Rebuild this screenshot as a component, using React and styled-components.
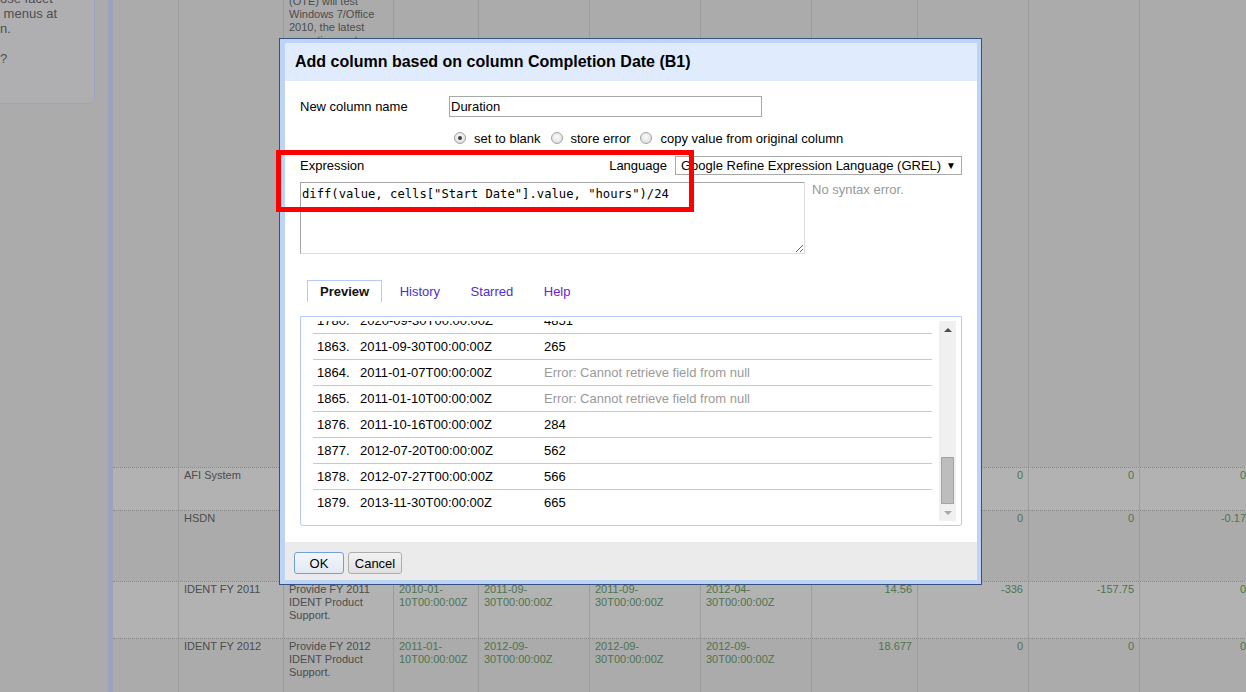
import React from 'react';
import styled, { createGlobalStyle } from 'styled-components';

const GlobalStyle = createGlobalStyle`
  *, *::before, *::after { box-sizing: border-box; }
  html, body { margin: 0; padding: 0; overflow: hidden; }
  body {
    background: #ababab;
    font-family: "Liberation Sans", Arial, sans-serif;
  }
`;

const Page = styled.div`
  position: relative;
  display: flex;
  width: 1246px;
  height: 692px;
  overflow: hidden;
  background: #ababab;
`;

/* ---------- dimmed page behind the dialog ---------- */

const LeftPane = styled.div`
  width: 108px;
  flex-shrink: 0;
`;

const HelpBox = styled.div`
  width: 96px;
  height: 114px;
  margin: -10px 0 0 -1px;
  border: 1px solid #9ca4c4;
  border-radius: 0 0 6px 0;
  background: #afafb1;
  font-size: 13px;
  line-height: 15px;
  color: #4e4e4e;
  white-space: pre;
  overflow: hidden;
`;

const Stripe = styled.div`
  width: 5px;
  flex-shrink: 0;
  background: #9ca2bc;
`;

const Grid = styled.div`
  flex: 1;
  margin-top: -19px;
  display: flex;
  flex-direction: column;
`;

const Row = styled.div`
  display: grid;
  grid-template-columns: 65px 105px 110px 85px 111px 111px 111px 106px 111px 111px 112px;
  flex-shrink: 0;
  height: ${p => p.$h}px;
  background: ${p => (p.$light ? '#b2b2b2' : '#ababab')};
  border-top: ${p => (p.$first ? 'none' : '1px dotted #8a8a8a')};
`;

const Cell = styled.div`
  border-left: ${p => (p.$edge ? 'none' : '1px solid #9c9c9c')};
  padding: 1px 5px 0 5px;
  font-size: 11px;
  line-height: 13px;
  color: ${p => (p.$green ? '#4d744d' : '#4c4c4c')};
  text-align: ${p => (p.$num ? 'right' : 'left')};
  white-space: nowrap;
  overflow: hidden;
`;

/* ---------- dialog ---------- */

const Dialog = styled.div`
  position: absolute;
  left: 279px;
  top: 38px;
  width: 703px;
  height: 547px;
  border: 1px solid #34527a;
  background: #bdd4f7;
  padding: 4px 4px 4px 5px;
  display: flex;
  flex-direction: column;
  font-size: 13px;
  color: #000;
`;

const Header = styled.div`
  height: 38px;
  flex-shrink: 0;
  display: flex;
  align-items: center;
  padding-left: 10px;
  background: #e0ecfe;
  font-size: 16px;
  font-weight: bold;
`;

const Body = styled.div`
  flex: 1;
  background: #fff;
  padding: 15px 15px 16px 15px;
  display: flex;
  flex-direction: column;
`;

const NameRow = styled.div`
  display: flex;
  align-items: center;
  height: 21px;
`;

const Label = styled.span`
  width: ${p => p.$w || 'auto'};
  flex-shrink: 0;
`;

const TextInput = styled.input`
  width: 313px;
  height: 21px;
  border: 1px solid #a9a9a9;
  padding: 0 1px;
  font: 13px "Liberation Sans", Arial, sans-serif;
  color: #000;
  outline: none;
`;

const RadioRow = styled.div`
  display: flex;
  align-items: center;
  height: 16px;
  margin-top: 13px;
  padding-left: 154px;
`;

const Radio = styled.span`
  position: relative;
  width: 12px;
  height: 12px;
  border-radius: 50%;
  border: 1px solid #a2a2a2;
  background: radial-gradient(circle at 50% 40%, #fbfbfb 0%, #e3e3e3 70%, #d2d2d2 100%);
  margin-right: 8px;
  &::after {
    content: '';
    display: ${p => (p.$on ? 'block' : 'none')};
    position: absolute;
    left: 3px;
    top: 3px;
    width: 4px;
    height: 4px;
    border-radius: 50%;
    background: #3c3c3c;
  }
`;

const RadioText = styled.span`
  margin-right: 10px;
`;

const ExprHead = styled.div`
  display: flex;
  align-items: center;
  justify-content: space-between;
  height: 19px;
  margin-top: 10px;
`;

const LangGroup = styled.div`
  display: flex;
  align-items: center;
  gap: 8px;
`;

const Select = styled.div`
  width: 287px;
  height: 19px;
  border: 1px solid #a9a9a9;
  display: flex;
  align-items: center;
  justify-content: space-between;
  padding: 0 5px 0 5px;
  background: #fff;
  span:last-child {
    font-size: 10px;
  }
`;

const ExprRow = styled.div`
  display: flex;
  margin-top: 7px;
`;

const Editor = styled.textarea`
  width: 505px;
  height: 72px;
  margin: 0;
  padding: 3px 1px;
  border: 1px solid #a6a6a6;
  border-right-color: #dcdcdc;
  border-bottom-color: #dcdcdc;
  font-family: "DejaVu Sans Mono", "Liberation Mono", monospace;
  font-size: 12.2px;
  line-height: 16px;
  color: #000;
  outline: none;
`;

const Status = styled.div`
  margin-left: 7px;
  color: #999;
`;

const Tabs = styled.div`
  display: flex;
  gap: 4.5px;
  height: 22px;
  margin-top: 26px;
  padding-left: 7px;
`;

const Tab = styled.div`
  display: flex;
  align-items: center;
  padding: 0 12px;
  border: 1px solid ${p => (p.$active ? '#b6cbf3' : 'transparent')};
  border-bottom: none;
  font-weight: ${p => (p.$active ? 'bold' : 'normal')};
  color: ${p => (p.$active ? '#111' : p.$color)};
`;

const Panel = styled.div`
  display: flex;
  height: 210px;
  margin-top: 14px;
  padding: 4px 0;
  border: 1px solid #b6cbf3;
  border-radius: 0 0 3px 3px;
`;

const List = styled.div`
  flex: 1;
  overflow: hidden;
  padding: 0 7px 0 12px;
`;

const ListInner = styled.div`
  margin-top: -14px;
`;

const Item = styled.div`
  display: grid;
  grid-template-columns: 43px 184px 1fr;
  height: 26px;
  padding-left: 4px;
  border-top: 1px solid #c8c8c8;
  line-height: 25px;
  color: #000;
`;

const Value = styled.span`
  color: ${p => (p.$error ? '#9a9a9a' : '#000')};
`;

const Scrollbar = styled.div`
  width: 17px;
  margin-right: 5px;
  background: #f0f0f0;
  display: flex;
  flex-direction: column;
`;

const Arrow = styled.div`
  height: 17px;
  flex-shrink: 0;
  display: flex;
  align-items: center;
  justify-content: center;
  &::before {
    content: '';
    border-left: 4px solid transparent;
    border-right: 4px solid transparent;
    ${p => (p.$down
      ? 'border-top: 4px solid #a8a8a8;'
      : 'border-bottom: 4px solid #4e4e4e;')}
  }
`;

const Track = styled.div`
  flex: 1;
`;

const Thumb = styled.div`
  height: 47px;
  margin: 0 2px;
  background: #bdbdbd;
  border: 1px solid #a3a3a3;
`;

const Footer = styled.div`
  height: 38px;
  flex-shrink: 0;
  display: flex;
  gap: 4px;
  padding: 10px 9px 0;
  background: #ebebeb;
`;

const Button = styled.button`
  width: ${p => p.$w}px;
  height: 22px;
  padding: 0;
  border-radius: 3px;
  border: 1px solid ${p => (p.$primary ? '#72a0d6' : '#adadad')};
  background: ${p => (p.$primary
    ? 'linear-gradient(#f3f6fb, #e2e9f4)'
    : 'linear-gradient(#f2f2f2, #e0e0e0)')};
  font: 13px "Liberation Sans", Arial, sans-serif;
  color: #000;
`;

const Highlight = styled.div`
  position: absolute;
  left: 276px;
  top: 150px;
  width: 418px;
  height: 62px;
  border: 5px solid #ff0000;
  pointer-events: none;
`;

const helpLines = ['ose facet', ' menus at', 'n.', '', '?'];

const rows = [
  {
    h: 486,
    first: true,
    cells: { 2: { lines: ['operations team', '(OTE) will test', 'Windows 7/Office', '2010, the latest', 'operating system', 'and office suite'] } },
  },
  {
    h: 43,
    light: true,
    cells: {
      1: { lines: ['AFI System'] },
      8: { lines: ['0'], num: true },
      9: { lines: ['0'], num: true },
      10: { lines: ['0'], num: true },
    },
  },
  {
    h: 71,
    cells: {
      1: { lines: ['HSDN'] },
      8: { lines: ['0'], num: true },
      9: { lines: ['0'], num: true },
      10: { lines: ['-0.17'], num: true },
    },
  },
  {
    h: 57,
    light: true,
    cells: {
      1: { lines: ['IDENT FY 2011'] },
      2: { lines: ['Provide FY 2011', 'IDENT Product', 'Support.'] },
      3: { lines: ['2010-01-', '10T00:00:00Z'], green: true },
      4: { lines: ['2011-09-', '30T00:00:00Z'], green: true },
      5: { lines: ['2011-09-', '30T00:00:00Z'], green: true },
      6: { lines: ['2012-04-', '30T00:00:00Z'], green: true },
      7: { lines: ['14.56'], num: true },
      8: { lines: ['-336'], num: true },
      9: { lines: ['-157.75'], num: true },
      10: { lines: ['0'], num: true },
    },
  },
  {
    h: 60,
    cells: {
      1: { lines: ['IDENT FY 2012'] },
      2: { lines: ['Provide FY 2012', 'IDENT Product', 'Support.'] },
      3: { lines: ['2011-01-', '10T00:00:00Z'], green: true },
      4: { lines: ['2012-09-', '30T00:00:00Z'], green: true },
      5: { lines: ['2012-09-', '30T00:00:00Z'], green: true },
      6: { lines: ['2012-09-', '30T00:00:00Z'], green: true },
      7: { lines: ['18.677'], num: true },
      8: { lines: ['0'], num: true },
      9: { lines: ['0'], num: true },
      10: { lines: ['0'], num: true },
    },
  },
];

const preview = [
  ['1780.', '2020-09-30T00:00:00Z', '4851'],
  ['1863.', '2011-09-30T00:00:00Z', '265'],
  ['1864.', '2011-01-07T00:00:00Z', 'Error: Cannot retrieve field from null', true],
  ['1865.', '2011-01-10T00:00:00Z', 'Error: Cannot retrieve field from null', true],
  ['1876.', '2011-10-16T00:00:00Z', '284'],
  ['1877.', '2012-07-20T00:00:00Z', '562'],
  ['1878.', '2012-07-27T00:00:00Z', '566'],
  ['1879.', '2013-11-30T00:00:00Z', '665'],
];

const tabs = [
  { label: 'Preview', active: true },
  { label: 'History', color: '#4d2fd0' },
  { label: 'Starred', color: '#4d2fd0' },
  { label: 'Help', color: '#6a22d8' },
];

export default function App() {
  return (
    <Page>
      <GlobalStyle />
      <LeftPane>
        <HelpBox>
          {helpLines.map((l, i) => <div key={i}>{l || ' '}</div>)}
        </HelpBox>
      </LeftPane>
      <Stripe />
      <Grid>
        {rows.map((r, ri) => (
          <Row key={ri} $h={r.h} $light={r.light} $first={r.first}>
            {Array.from({ length: 11 }).map((_, ci) => {
              const c = r.cells[ci];
              const green = c && (c.green || c.num);
              return (
                <Cell key={ci} $edge={ci === 0} $green={green} $num={c && c.num}>
                  {c && c.lines.map((l, li) => <div key={li}>{l}</div>)}
                </Cell>
              );
            })}
          </Row>
        ))}
      </Grid>

      <Dialog>
        <Header>Add column based on column Completion Date (B1)</Header>
        <Body>
          <NameRow>
            <Label $w="149px">New column name</Label>
            <TextInput defaultValue="Duration" readOnly />
          </NameRow>
          <RadioRow>
            <Radio $on />
            <RadioText>set to blank</RadioText>
            <Radio />
            <RadioText>store error</RadioText>
            <Radio />
            <RadioText>copy value from original column</RadioText>
          </RadioRow>
          <ExprHead>
            <Label>Expression</Label>
            <LangGroup>
              <Label>Language</Label>
              <Select>
                <span>Google Refine Expression Language (GREL)</span>
                <span>▼</span>
              </Select>
            </LangGroup>
          </ExprHead>
          <ExprRow>
            <Editor
              readOnly
              spellCheck={false}
              defaultValue={'diff(value, cells["Start Date"].value, "hours")/24'}
            />
            <Status>No syntax error.</Status>
          </ExprRow>
          <Tabs>
            {tabs.map(t => (
              <Tab key={t.label} $active={t.active} $color={t.color}>{t.label}</Tab>
            ))}
          </Tabs>
          <Panel>
            <List>
              <ListInner>
                {preview.map(([n, d, v, err]) => (
                  <Item key={n}>
                    <span>{n}</span>
                    <span>{d}</span>
                    <Value $error={err}>{v}</Value>
                  </Item>
                ))}
              </ListInner>
            </List>
            <Scrollbar>
              <Arrow />
              <Track />
              <Thumb />
              <Arrow $down />
            </Scrollbar>
          </Panel>
        </Body>
        <Footer>
          <Button $primary $w={50}>OK</Button>
          <Button $w={54}>Cancel</Button>
        </Footer>
      </Dialog>
      <Highlight />
    </Page>
  );
}
